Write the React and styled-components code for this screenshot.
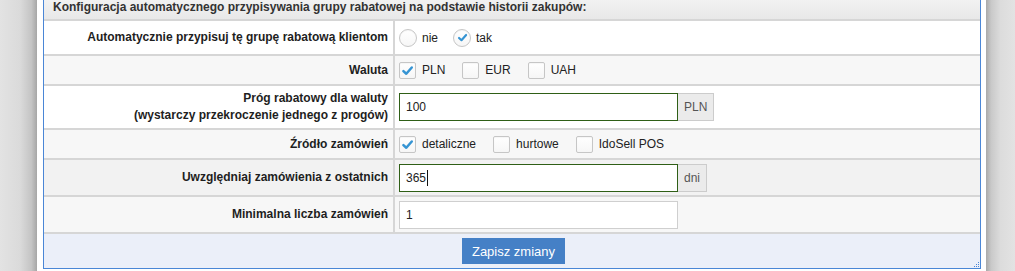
import React from "react";
import styled, { createGlobalStyle } from "styled-components";

const GlobalStyle = createGlobalStyle`
  html, body {
    margin: 0;
    padding: 0;
    background: #e2e2e2;
  }
  body {
    font-family: "Liberation Sans", Arial, sans-serif;
    font-size: 12px;
    color: #222;
  }
`;

const Page = styled.div`
  display: flex;
  width: 1015px;
  height: 271px;
  overflow: hidden;
`;

const Shade = styled.div`
  flex: ${(p) => (p.$left ? "0 0 37px" : "1 1 auto")};
  background: ${(p) =>
    p.$left
      ? "linear-gradient(to right, #e3e3e3 0%, #dadada 55%, #c4c4c4 85%, #a6a6a6 100%)"
      : "linear-gradient(to right, #a9a9a9 0%, #c9c9c9 18%, #dcdcdc 50%, #e3e3e3 100%)"};
`;

const Frame = styled.div`
  flex: 0 0 auto;
  background: #fff;
  padding: 0 5px 0 6px;
`;

const Panel = styled.div`
  position: relative;
  width: 936px;
  border: 1px solid #4a86d6;
  border-top: none;
`;

const Header = styled.div`
  height: 19px;
  border-bottom: 2px solid #d6d6d6;
  background: linear-gradient(to bottom, #f2f2f2, #e8e8e8);
  padding-left: 9px;
  font-weight: bold;
  color: #333;
  line-height: 14px;
`;

const Row = styled.div`
  display: flex;
  height: ${(p) => p.$h}px;
  border-bottom: 2px solid #d6d6d6;
  background: ${(p) => p.$bg || "#fff"};
`;

const Label = styled.div`
  flex: 0 0 344px;
  padding-right: 5px;
  border-right: 2px solid #d6d6d6;
  display: flex;
  flex-direction: column;
  justify-content: center;
  align-items: flex-end;
  text-align: right;
  font-weight: bold;
  color: #1e1e1e;
  line-height: 17px;
`;

const Value = styled.div`
  flex: 1 1 auto;
  padding-left: 4px;
  display: flex;
  align-items: center;
`;

const Option = styled.label`
  display: flex;
  align-items: center;
  gap: ${(p) => (p.$radio ? "5px" : "6px")};
  margin-right: ${(p) => (p.$radio ? "15px" : "17px")};
  color: #222;
`;

const Box = styled.span`
  width: 15px;
  height: 15px;
  border: 1px solid #c6c6c6;
  border-radius: ${(p) => (p.$round ? "50%" : "2px")};
  background: linear-gradient(to bottom, #ffffff, #f6f6f6);
  box-shadow: inset 0 1px 1px rgba(0, 0, 0, 0.04);
  display: flex;
  align-items: center;
  justify-content: center;
  box-sizing: content-box;
  ${(p) => p.$round && "width: 16px; height: 16px;"}
`;

const InputGroup = styled.div`
  display: flex;
  align-items: stretch;
  height: 28px;
`;

const TextInput = styled.div`
  width: 271px;
  border: 1px solid ${(p) => (p.$focus ? "#2f5f16" : "#cfcfcf")};
  background: #fff;
  padding-left: 6px;
  display: flex;
  align-items: center;
  color: #222;
`;

const Caret = styled.span`
  display: inline-block;
  width: 1px;
  height: 16px;
  background: #111;
  margin-left: 1px;
`;

const Suffix = styled.div`
  border: 1px solid #cccccc;
  border-left: none;
  background: #ebebeb;
  color: #555;
  padding: 0 6px;
  display: flex;
  align-items: center;
`;

const Footer = styled.div`
  height: 34px;
  background: #ebeff9;
  display: flex;
  align-items: center;
  justify-content: center;
  padding-left: 3px;
`;

const Button = styled.button`
  height: 26px;
  padding: 0 10px;
  border: none;
  background: #4580c6;
  color: #fff;
  font-family: "Liberation Sans", Arial, sans-serif;
  font-size: 13px;
`;

const Grip = styled.svg`
  position: absolute;
  right: 0;
  bottom: 0;
`;

const Tick = ({ size = 13 }) => (
  <svg width={size} height={size} viewBox="0 0 14 14">
    <path
      d="M2.6 7.6 L5.7 10.5 L11.6 3.8"
      fill="none"
      stroke="#3594d3"
      strokeWidth="2.7"
      strokeLinecap="round"
      strokeLinejoin="round"
    />
  </svg>
);

const Check = ({ label, checked }) => (
  <Option>
    <Box>{checked && <Tick />}</Box>
    {label}
  </Option>
);

const Radio = ({ label, checked }) => (
  <Option $radio>
    <Box $round>{checked && <Tick size={11} />}</Box>
    {label}
  </Option>
);

function App() {
  return (
    <>
      <GlobalStyle />
      <Page>
        <Shade $left />
        <Frame>
          <Panel>
            <Header>
              Konfiguracja automatycznego przypisywania grupy rabatowej na
              podstawie historii zakupów:
            </Header>
            <Row $h={33}>
              <Label>Automatycznie przypisuj tę grupę rabatową klientom</Label>
              <Value>
                <Radio label="nie" />
                <Radio label="tak" checked />
              </Value>
            </Row>
            <Row $h={28} $bg="#f7f7f7">
              <Label>Waluta</Label>
              <Value>
                <Check label="PLN" checked />
                <Check label="EUR" />
                <Check label="UAH" />
              </Value>
            </Row>
            <Row $h={42}>
              <Label>
                <span>Próg rabatowy dla waluty</span>
                <span>(wystarczy przekroczenie jednego z progów)</span>
              </Label>
              <Value>
                <InputGroup>
                  <TextInput $focus>100</TextInput>
                  <Suffix>PLN</Suffix>
                </InputGroup>
              </Value>
            </Row>
            <Row $h={28} $bg="#f7f7f7">
              <Label>Źródło zamówień</Label>
              <Value>
                <Check label="detaliczne" checked />
                <Check label="hurtowe" />
                <Check label="IdoSell POS" />
              </Value>
            </Row>
            <Row $h={35} $bg="#f2f2f2">
              <Label>Uwzględniaj zamówienia z ostatnich</Label>
              <Value>
                <InputGroup>
                  <TextInput $focus>
                    365
                    <Caret />
                  </TextInput>
                  <Suffix>dni</Suffix>
                </InputGroup>
              </Value>
            </Row>
            <Row $h={35} $bg="#f7f7f7">
              <Label>Minimalna liczba zamówień</Label>
              <Value>
                <InputGroup>
                  <TextInput>1</TextInput>
                </InputGroup>
              </Value>
            </Row>
            <Footer>
              <Button>Zapisz zmiany</Button>
            </Footer>
            <Grip width="6" height="6" viewBox="0 0 6 6">
              <rect x="4" y="0" width="1" height="1" fill="#4a86d6" />
              <rect x="2" y="2" width="1" height="1" fill="#4a86d6" />
              <rect x="4" y="2" width="1" height="1" fill="#4a86d6" />
              <rect x="0" y="4" width="1" height="1" fill="#4a86d6" />
              <rect x="2" y="4" width="1" height="1" fill="#4a86d6" />
              <rect x="4" y="4" width="1" height="1" fill="#4a86d6" />
            </Grip>
          </Panel>
        </Frame>
        <Shade />
      </Page>
    </>
  );
}

export default App;
